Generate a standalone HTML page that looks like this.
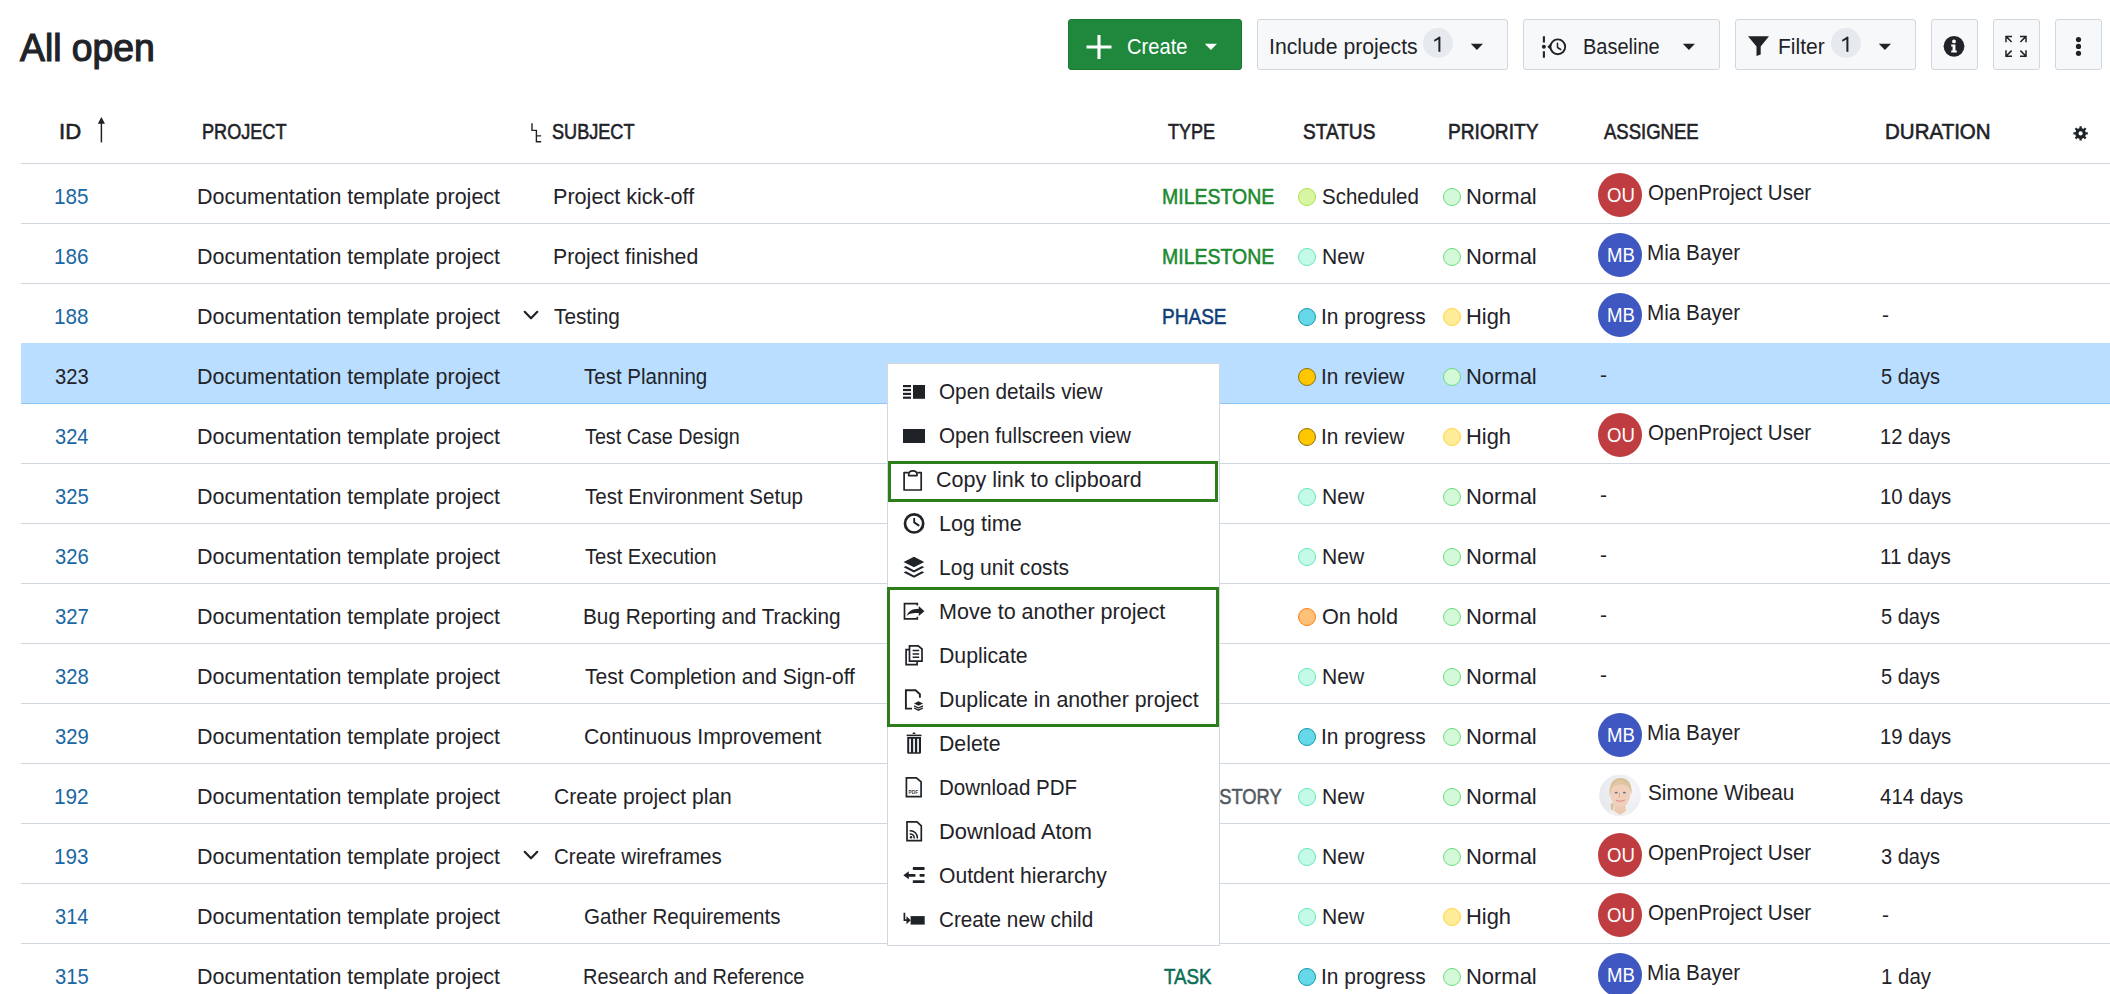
<!DOCTYPE html>
<html><head><meta charset="utf-8"><style>
html,body{margin:0;padding:0;background:#fff;width:2110px;height:994px;overflow:hidden;position:relative}
body{font-family:"Liberation Sans",sans-serif;color:#1f2328}
.t{position:absolute;white-space:nowrap}
svg{overflow:visible}
</style></head><body>
<div class="t" style="left:20.0px;top:29px;font-size:38px;line-height:38px;font-weight:400;color:#1f2328;transform:scaleX(0.9822);transform-origin:0 0;-webkit-text-stroke:1.2px #1f2328;">All open</div>
<div style="position:absolute;left:1068px;top:19px;width:174px;height:51px;box-sizing:border-box;border-radius:3px;background:#1f883d;border:1px solid #1b7a37;"></div>
<svg style="position:absolute;left:1086px;top:35px" width="26" height="25" viewBox="0 0 26 25"><path d="M13 0V24M0.5 12H25.5" stroke="#fff" stroke-width="3.1"/></svg>
<div class="t" style="left:1126.99px;top:37px;font-size:21.5px;line-height:21.5px;font-weight:400;color:#fff;transform:scaleX(0.9366);transform-origin:0 0;">Create</div>
<svg style="position:absolute;left:1204px;top:43px" width="14" height="8" viewBox="0 0 14 8"><path d="M0.8 0.8H13L6.9 7Z" fill="#fff"/></svg>
<div style="position:absolute;left:1257px;top:19px;width:251px;height:51px;box-sizing:border-box;border-radius:3px;background:#f6f8fa;border:1px solid #d0d7de;"></div>
<div class="t" style="left:1268.69px;top:37px;font-size:21.5px;line-height:21.5px;font-weight:400;color:#1f2328;transform:scaleX(0.9877);transform-origin:0 0;">Include projects</div>
<div style="position:absolute;left:1423px;top:28px;width:30px;height:30px;border-radius:15px;background:#e6eaef"></div>
<svg style="position:absolute;left:1423px;top:28px" width="30" height="30" viewBox="0 0 30 30"><path d="M16.4 8.8V23.8" stroke="#1f2328" stroke-width="2"/><path d="M16.6 8.6L11.2 11.8V13.8L16.4 11Z" fill="#1f2328"/></svg>
<svg style="position:absolute;left:1470px;top:43px" width="14" height="8" viewBox="0 0 14 8"><path d="M0.8 0.8H13L6.9 7Z" fill="#1f2328"/></svg>
<div style="position:absolute;left:1523px;top:19px;width:197px;height:51px;box-sizing:border-box;border-radius:3px;background:#f6f8fa;border:1px solid #d0d7de;"></div>
<svg style="position:absolute;left:0;top:0" width="2110" height="80" viewBox="0 0 2110 80"><path d="M1543.9 36.2V42.6M1543.9 51.2V57.7" stroke="#1f2328" stroke-width="2.1"/><circle cx="1543.9" cy="46.8" r="2" fill="#1f2328"/><path d="M1547.3 46.8L1550.8 43.6V50Z" fill="#1f2328"/><circle cx="1557.8" cy="46.8" r="7.4" fill="none" stroke="#1f2328" stroke-width="1.9"/><path d="M1557.5 43.2V47.5L1560.7 49.5" fill="none" stroke="#1f2328" stroke-width="1.5" stroke-linecap="round" stroke-linejoin="round"/></svg>
<div class="t" style="left:1582.9px;top:37px;font-size:21.5px;line-height:21.5px;font-weight:400;color:#1f2328;transform:scaleX(0.9302);transform-origin:0 0;">Baseline</div>
<svg style="position:absolute;left:1682px;top:43px" width="14" height="8" viewBox="0 0 14 8"><path d="M0.8 0.8H13L6.9 7Z" fill="#1f2328"/></svg>
<div style="position:absolute;left:1735px;top:19px;width:181px;height:51px;box-sizing:border-box;border-radius:3px;background:#f6f8fa;border:1px solid #d0d7de;"></div>
<svg style="position:absolute;left:0;top:0" width="2110" height="80" viewBox="0 0 2110 80"><path d="M1748 36.2H1769L1760.7 46.6V54.6L1756.5 56V46.6Z" fill="#1f2328"/></svg>
<div class="t" style="left:1777.82px;top:37px;font-size:21.5px;line-height:21.5px;font-weight:400;color:#1f2328;transform:scaleX(0.9784);transform-origin:0 0;">Filter</div>
<div style="position:absolute;left:1831px;top:28px;width:30px;height:30px;border-radius:15px;background:#e6eaef"></div>
<svg style="position:absolute;left:1831px;top:28px" width="30" height="30" viewBox="0 0 30 30"><path d="M16.4 8.8V23.8" stroke="#1f2328" stroke-width="2"/><path d="M16.6 8.6L11.2 11.8V13.8L16.4 11Z" fill="#1f2328"/></svg>
<svg style="position:absolute;left:1878px;top:43px" width="14" height="8" viewBox="0 0 14 8"><path d="M0.8 0.8H13L6.9 7Z" fill="#1f2328"/></svg>
<div style="position:absolute;left:1931px;top:19px;width:47px;height:51px;box-sizing:border-box;border-radius:3px;background:#f6f8fa;border:1px solid #d0d7de;"></div>
<svg style="position:absolute;left:1943px;top:35px" width="22" height="22" viewBox="0 0 22 22"><circle cx="11" cy="11.3" r="10.4" fill="#1f2328"/><circle cx="11" cy="6.4" r="1.9" fill="#fff"/><path d="M8.2 9.6H12.4V15.6H13.8V17.4H8.2V15.6H9.6V11.4H8.2Z" fill="#fff"/></svg>
<div style="position:absolute;left:1993px;top:19px;width:47px;height:51px;box-sizing:border-box;border-radius:3px;background:#f6f8fa;border:1px solid #d0d7de;"></div>
<svg style="position:absolute;left:0;top:0" width="2110" height="80" viewBox="0 0 2110 80" fill="none" stroke="#1f2328" stroke-width="1.5"><path d="M2006 42.2V36.4H2012M2006 36.4L2011.6 42"/><path d="M2026 42.2V36.4H2020M2026 36.4L2020.4 42"/><path d="M2006 50.2V56.2H2012M2006 56.2L2011.6 50.6"/><path d="M2026 50.2V56.2H2020M2026 56.2L2020.4 50.6"/></svg>
<div style="position:absolute;left:2055px;top:19px;width:47px;height:51px;box-sizing:border-box;border-radius:3px;background:#f6f8fa;border:1px solid #d0d7de;"></div>
<svg style="position:absolute;left:2074px;top:35px" width="9" height="23" viewBox="0 0 9 23" fill="#1f2328"><circle cx="4.5" cy="4.6" r="2.6"/><circle cx="4.5" cy="11.4" r="2.6"/><circle cx="4.5" cy="18.3" r="2.6"/></svg>
<div class="t" style="left:59.31px;top:122px;font-size:21.5px;line-height:21.5px;font-weight:400;color:#1f2328;transform:scaleX(1.027);transform-origin:0 0;-webkit-text-stroke:0.6px #1f2328;">ID</div>
<svg style="position:absolute;left:0;top:0" width="2110" height="200" viewBox="0 0 2110 200"><path d="M101.4 117.1L105 123.8H97.8Z" fill="#1f2328"/><path d="M101.4 123V142.4" stroke="#1f2328" stroke-width="1.5"/><path d="M532 123.2V130.4H536.4V141.7H541.2M536.4 135.9H541.2" fill="none" stroke="#1f2328" stroke-width="1.4"/></svg>
<div class="t" style="left:202.15px;top:122px;font-size:21.5px;line-height:21.5px;font-weight:400;color:#1f2328;transform:scaleX(0.8416);transform-origin:0 0;-webkit-text-stroke:0.6px #1f2328;">PROJECT</div>
<div class="t" style="left:552.19px;top:122px;font-size:21.5px;line-height:21.5px;font-weight:400;color:#1f2328;transform:scaleX(0.8422);transform-origin:0 0;-webkit-text-stroke:0.6px #1f2328;">SUBJECT</div>
<div class="t" style="left:1167.94px;top:122px;font-size:21.5px;line-height:21.5px;font-weight:400;color:#1f2328;transform:scaleX(0.839);transform-origin:0 0;-webkit-text-stroke:0.6px #1f2328;">TYPE</div>
<div class="t" style="left:1303.44px;top:122px;font-size:21.5px;line-height:21.5px;font-weight:400;color:#1f2328;transform:scaleX(0.8863);transform-origin:0 0;-webkit-text-stroke:0.6px #1f2328;">STATUS</div>
<div class="t" style="left:1447.87px;top:122px;font-size:21.5px;line-height:21.5px;font-weight:400;color:#1f2328;transform:scaleX(0.891);transform-origin:0 0;-webkit-text-stroke:0.6px #1f2328;">PRIORITY</div>
<div class="t" style="left:1604.3px;top:122px;font-size:21.5px;line-height:21.5px;font-weight:400;color:#1f2328;transform:scaleX(0.8605);transform-origin:0 0;-webkit-text-stroke:0.6px #1f2328;">ASSIGNEE</div>
<div class="t" style="left:1885.06px;top:122px;font-size:21.5px;line-height:21.5px;font-weight:400;color:#1f2328;transform:scaleX(0.9545);transform-origin:0 0;-webkit-text-stroke:0.6px #1f2328;">DURATION</div>
<svg style="position:absolute;left:0;top:0" width="2110" height="200" viewBox="0 0 2110 200"><circle cx="2080.6" cy="133.4" r="3.7" fill="none" stroke="#1f2328" stroke-width="3.2"/><path d="M2084.80 133.40L2087.80 133.40M2083.57 136.37L2085.69 138.49M2080.60 137.60L2080.60 140.60M2077.63 136.37L2075.51 138.49M2076.40 133.40L2073.40 133.40M2077.63 130.43L2075.51 128.31M2080.60 129.20L2080.60 126.20M2083.57 130.43L2085.69 128.31" stroke="#1f2328" stroke-width="2.3"/></svg>
<div style="position:absolute;left:21px;top:163px;width:2089px;height:1px;background:#d0d7de"></div>
<div style="position:absolute;left:21px;top:223px;width:2089px;height:1px;background:#d0d7de"></div>
<div class="t" style="left:53.95px;top:187px;font-size:21.5px;line-height:21.5px;font-weight:400;color:#1a67a3;transform:scaleX(0.9602);transform-origin:0 0;">185</div>
<div class="t" style="left:197.08px;top:187px;font-size:21.5px;line-height:21.5px;font-weight:400;color:#1f2328;transform:scaleX(0.9982);transform-origin:0 0;">Documentation template project</div>
<div class="t" style="left:552.87px;top:187px;font-size:21.5px;line-height:21.5px;font-weight:400;color:#1f2328;transform:scaleX(1.0044);transform-origin:0 0;">Project kick-off</div>
<div class="t" style="left:1162.32px;top:187px;font-size:21.5px;line-height:21.5px;font-weight:400;color:#1d8a30;transform:scaleX(0.9059);transform-origin:0 0;-webkit-text-stroke:0.55px #1d8a30;">MILESTONE</div>
<div style="position:absolute;left:1298px;top:188px;width:18px;height:18px;box-sizing:border-box;border-radius:50%;background:#d8f5a2;border:1px solid #a9e34b"></div>
<div class="t" style="left:1322.28px;top:187px;font-size:21.5px;line-height:21.5px;font-weight:400;color:#1f2328;transform:scaleX(0.9524);transform-origin:0 0;">Scheduled</div>
<div style="position:absolute;left:1443px;top:188px;width:18px;height:18px;box-sizing:border-box;border-radius:50%;background:#d3f9d8;border:1px solid #69db7c"></div>
<div class="t" style="left:1466.44px;top:187px;font-size:21.5px;line-height:21.5px;font-weight:400;color:#1f2328;transform:scaleX(1.021);transform-origin:0 0;">Normal</div>
<div style="position:absolute;left:1598px;top:173px;width:44px;height:44px;border-radius:50%;background:#bf3d41"></div>
<div class="t" style="left:1607px;top:185px;font-size:20px;line-height:20px;font-weight:400;color:#fff;transform:scaleX(0.93);transform-origin:0 0;">OU</div>
<div class="t" style="left:1647.88px;top:183px;font-size:21.5px;line-height:21.5px;font-weight:400;color:#1f2328;transform:scaleX(0.955);transform-origin:0 0;">OpenProject User</div>
<div style="position:absolute;left:21px;top:283px;width:2089px;height:1px;background:#d0d7de"></div>
<div class="t" style="left:53.95px;top:247px;font-size:21.5px;line-height:21.5px;font-weight:400;color:#1a67a3;transform:scaleX(0.9602);transform-origin:0 0;">186</div>
<div class="t" style="left:197.08px;top:247px;font-size:21.5px;line-height:21.5px;font-weight:400;color:#1f2328;transform:scaleX(0.9982);transform-origin:0 0;">Documentation template project</div>
<div class="t" style="left:552.9px;top:247px;font-size:21.5px;line-height:21.5px;font-weight:400;color:#1f2328;transform:scaleX(0.9879);transform-origin:0 0;">Project finished</div>
<div class="t" style="left:1162.32px;top:247px;font-size:21.5px;line-height:21.5px;font-weight:400;color:#1d8a30;transform:scaleX(0.9059);transform-origin:0 0;-webkit-text-stroke:0.55px #1d8a30;">MILESTONE</div>
<div style="position:absolute;left:1298px;top:248px;width:18px;height:18px;box-sizing:border-box;border-radius:50%;background:#c3fae8;border:1px solid #63e6be"></div>
<div class="t" style="left:1321.51px;top:247px;font-size:21.5px;line-height:21.5px;font-weight:400;color:#1f2328;transform:scaleX(0.981);transform-origin:0 0;">New</div>
<div style="position:absolute;left:1443px;top:248px;width:18px;height:18px;box-sizing:border-box;border-radius:50%;background:#d3f9d8;border:1px solid #69db7c"></div>
<div class="t" style="left:1466.44px;top:247px;font-size:21.5px;line-height:21.5px;font-weight:400;color:#1f2328;transform:scaleX(1.021);transform-origin:0 0;">Normal</div>
<div style="position:absolute;left:1598px;top:233px;width:44px;height:44px;border-radius:50%;background:#3f57c0"></div>
<div class="t" style="left:1607px;top:245px;font-size:20px;line-height:20px;font-weight:400;color:#fff;transform:scaleX(0.93);transform-origin:0 0;">MB</div>
<div class="t" style="left:1647.14px;top:243px;font-size:21.5px;line-height:21.5px;font-weight:400;color:#1f2328;transform:scaleX(0.963);transform-origin:0 0;">Mia Bayer</div>
<div style="position:absolute;left:21px;top:343px;width:2089px;height:1px;background:#d0d7de"></div>
<div class="t" style="left:53.95px;top:307px;font-size:21.5px;line-height:21.5px;font-weight:400;color:#1a67a3;transform:scaleX(0.9602);transform-origin:0 0;">188</div>
<div class="t" style="left:197.08px;top:307px;font-size:21.5px;line-height:21.5px;font-weight:400;color:#1f2328;transform:scaleX(0.9982);transform-origin:0 0;">Documentation template project</div>
<svg style="position:absolute;left:523px;top:310px" width="16" height="11" viewBox="0 0 16 11"><path d="M1.7 1.8L8 8.3L14.3 1.8" fill="none" stroke="#1f2328" stroke-width="2.2" stroke-linecap="round" stroke-linejoin="round"/></svg>
<div class="t" style="left:554.18px;top:307px;font-size:21.5px;line-height:21.5px;font-weight:400;color:#1f2328;transform:scaleX(0.9665);transform-origin:0 0;">Testing</div>
<div class="t" style="left:1162.35px;top:307px;font-size:21.5px;line-height:21.5px;font-weight:400;color:#0e3f7a;transform:scaleX(0.8854);transform-origin:0 0;-webkit-text-stroke:0.55px #0e3f7a;">PHASE</div>
<div style="position:absolute;left:1298px;top:308px;width:18px;height:18px;box-sizing:border-box;border-radius:50%;background:#66d9e8;border:1px solid #1098ad"></div>
<div class="t" style="left:1321.32px;top:307px;font-size:21.5px;line-height:21.5px;font-weight:400;color:#1f2328;transform:scaleX(0.9741);transform-origin:0 0;">In progress</div>
<div style="position:absolute;left:1443px;top:308px;width:18px;height:18px;box-sizing:border-box;border-radius:50%;background:#ffec99;border:1px solid #ffd43b"></div>
<div class="t" style="left:1466.45px;top:307px;font-size:21.5px;line-height:21.5px;font-weight:400;color:#1f2328;transform:scaleX(1.0179);transform-origin:0 0;">High</div>
<div style="position:absolute;left:1598px;top:293px;width:44px;height:44px;border-radius:50%;background:#3f57c0"></div>
<div class="t" style="left:1607px;top:305px;font-size:20px;line-height:20px;font-weight:400;color:#fff;transform:scaleX(0.93);transform-origin:0 0;">MB</div>
<div class="t" style="left:1647.14px;top:303px;font-size:21.5px;line-height:21.5px;font-weight:400;color:#1f2328;transform:scaleX(0.963);transform-origin:0 0;">Mia Bayer</div>
<div class="t" style="left:1882px;top:304px;font-size:21px;line-height:21px;font-weight:400;color:#1f2328;">-</div>
<div style="position:absolute;left:21px;top:343px;width:2089px;height:60px;background:#b9deff"></div>
<div style="position:absolute;left:21px;top:403px;width:2089px;height:1px;background:#8ec5f7"></div>
<div class="t" style="left:54.69px;top:367px;font-size:21.5px;line-height:21.5px;font-weight:400;color:#1f2328;transform:scaleX(0.939);transform-origin:0 0;">323</div>
<div class="t" style="left:197.08px;top:367px;font-size:21.5px;line-height:21.5px;font-weight:400;color:#1f2328;transform:scaleX(0.9982);transform-origin:0 0;">Documentation template project</div>
<div class="t" style="left:584.09px;top:367px;font-size:21.5px;line-height:21.5px;font-weight:400;color:#1f2328;transform:scaleX(0.9546);transform-origin:0 0;">Test Planning</div>
<div style="position:absolute;left:1298px;top:368px;width:18px;height:18px;box-sizing:border-box;border-radius:50%;background:#ffc700;border:1px solid #8f7100"></div>
<div class="t" style="left:1321.33px;top:367px;font-size:21.5px;line-height:21.5px;font-weight:400;color:#1f2328;transform:scaleX(0.9682);transform-origin:0 0;">In review</div>
<div style="position:absolute;left:1443px;top:368px;width:18px;height:18px;box-sizing:border-box;border-radius:50%;background:#d3f9d8;border:1px solid #69db7c"></div>
<div class="t" style="left:1466.44px;top:367px;font-size:21.5px;line-height:21.5px;font-weight:400;color:#1f2328;transform:scaleX(1.021);transform-origin:0 0;">Normal</div>
<div class="t" style="left:1600px;top:364px;font-size:21px;line-height:21px;font-weight:400;color:#1f2328;">-</div>
<div class="t" style="left:1880.7px;top:367px;font-size:21.5px;line-height:21.5px;font-weight:400;color:#1f2328;transform:scaleX(0.9319);transform-origin:0 0;">5 days</div>
<div style="position:absolute;left:21px;top:463px;width:2089px;height:1px;background:#d0d7de"></div>
<div class="t" style="left:54.7px;top:427px;font-size:21.5px;line-height:21.5px;font-weight:400;color:#1a67a3;transform:scaleX(0.9331);transform-origin:0 0;">324</div>
<div class="t" style="left:197.08px;top:427px;font-size:21.5px;line-height:21.5px;font-weight:400;color:#1f2328;transform:scaleX(0.9982);transform-origin:0 0;">Documentation template project</div>
<div class="t" style="left:584.7px;top:427px;font-size:21.5px;line-height:21.5px;font-weight:400;color:#1f2328;transform:scaleX(0.9188);transform-origin:0 0;">Test Case Design</div>
<div style="position:absolute;left:1298px;top:428px;width:18px;height:18px;box-sizing:border-box;border-radius:50%;background:#ffc700;border:1px solid #8f7100"></div>
<div class="t" style="left:1321.33px;top:427px;font-size:21.5px;line-height:21.5px;font-weight:400;color:#1f2328;transform:scaleX(0.9682);transform-origin:0 0;">In review</div>
<div style="position:absolute;left:1443px;top:428px;width:18px;height:18px;box-sizing:border-box;border-radius:50%;background:#ffec99;border:1px solid #ffd43b"></div>
<div class="t" style="left:1466.45px;top:427px;font-size:21.5px;line-height:21.5px;font-weight:400;color:#1f2328;transform:scaleX(1.0179);transform-origin:0 0;">High</div>
<div style="position:absolute;left:1598px;top:413px;width:44px;height:44px;border-radius:50%;background:#bf3d41"></div>
<div class="t" style="left:1607px;top:425px;font-size:20px;line-height:20px;font-weight:400;color:#fff;transform:scaleX(0.93);transform-origin:0 0;">OU</div>
<div class="t" style="left:1647.88px;top:423px;font-size:21.5px;line-height:21.5px;font-weight:400;color:#1f2328;transform:scaleX(0.955);transform-origin:0 0;">OpenProject User</div>
<div class="t" style="left:1879.99px;top:427px;font-size:21.5px;line-height:21.5px;font-weight:400;color:#1f2328;transform:scaleX(0.9357);transform-origin:0 0;">12 days</div>
<div style="position:absolute;left:21px;top:523px;width:2089px;height:1px;background:#d0d7de"></div>
<div class="t" style="left:54.69px;top:487px;font-size:21.5px;line-height:21.5px;font-weight:400;color:#1a67a3;transform:scaleX(0.939);transform-origin:0 0;">325</div>
<div class="t" style="left:197.08px;top:487px;font-size:21.5px;line-height:21.5px;font-weight:400;color:#1f2328;transform:scaleX(0.9982);transform-origin:0 0;">Documentation template project</div>
<div class="t" style="left:584.69px;top:487px;font-size:21.5px;line-height:21.5px;font-weight:400;color:#1f2328;transform:scaleX(0.9549);transform-origin:0 0;">Test Environment Setup</div>
<div style="position:absolute;left:1298px;top:488px;width:18px;height:18px;box-sizing:border-box;border-radius:50%;background:#c3fae8;border:1px solid #63e6be"></div>
<div class="t" style="left:1321.51px;top:487px;font-size:21.5px;line-height:21.5px;font-weight:400;color:#1f2328;transform:scaleX(0.981);transform-origin:0 0;">New</div>
<div style="position:absolute;left:1443px;top:488px;width:18px;height:18px;box-sizing:border-box;border-radius:50%;background:#d3f9d8;border:1px solid #69db7c"></div>
<div class="t" style="left:1466.44px;top:487px;font-size:21.5px;line-height:21.5px;font-weight:400;color:#1f2328;transform:scaleX(1.021);transform-origin:0 0;">Normal</div>
<div class="t" style="left:1600px;top:484px;font-size:21px;line-height:21px;font-weight:400;color:#1f2328;">-</div>
<div class="t" style="left:1880.07px;top:487px;font-size:21.5px;line-height:21.5px;font-weight:400;color:#1f2328;transform:scaleX(0.9467);transform-origin:0 0;">10 days</div>
<div style="position:absolute;left:21px;top:583px;width:2089px;height:1px;background:#d0d7de"></div>
<div class="t" style="left:54.69px;top:547px;font-size:21.5px;line-height:21.5px;font-weight:400;color:#1a67a3;transform:scaleX(0.939);transform-origin:0 0;">326</div>
<div class="t" style="left:197.08px;top:547px;font-size:21.5px;line-height:21.5px;font-weight:400;color:#1f2328;transform:scaleX(0.9982);transform-origin:0 0;">Documentation template project</div>
<div class="t" style="left:584.7px;top:547px;font-size:21.5px;line-height:21.5px;font-weight:400;color:#1f2328;transform:scaleX(0.9411);transform-origin:0 0;">Test Execution</div>
<div style="position:absolute;left:1298px;top:548px;width:18px;height:18px;box-sizing:border-box;border-radius:50%;background:#c3fae8;border:1px solid #63e6be"></div>
<div class="t" style="left:1321.51px;top:547px;font-size:21.5px;line-height:21.5px;font-weight:400;color:#1f2328;transform:scaleX(0.981);transform-origin:0 0;">New</div>
<div style="position:absolute;left:1443px;top:548px;width:18px;height:18px;box-sizing:border-box;border-radius:50%;background:#d3f9d8;border:1px solid #69db7c"></div>
<div class="t" style="left:1466.44px;top:547px;font-size:21.5px;line-height:21.5px;font-weight:400;color:#1f2328;transform:scaleX(1.021);transform-origin:0 0;">Normal</div>
<div class="t" style="left:1600px;top:544px;font-size:21px;line-height:21px;font-weight:400;color:#1f2328;">-</div>
<div class="t" style="left:1880.05px;top:547px;font-size:21.5px;line-height:21.5px;font-weight:400;color:#1f2328;transform:scaleX(0.9611);transform-origin:0 0;">11 days</div>
<div style="position:absolute;left:21px;top:643px;width:2089px;height:1px;background:#d0d7de"></div>
<div class="t" style="left:54.69px;top:607px;font-size:21.5px;line-height:21.5px;font-weight:400;color:#1a67a3;transform:scaleX(0.945);transform-origin:0 0;">327</div>
<div class="t" style="left:197.08px;top:607px;font-size:21.5px;line-height:21.5px;font-weight:400;color:#1f2328;transform:scaleX(0.9982);transform-origin:0 0;">Documentation template project</div>
<div class="t" style="left:583.44px;top:607px;font-size:21.5px;line-height:21.5px;font-weight:400;color:#1f2328;transform:scaleX(0.9663);transform-origin:0 0;">Bug Reporting and Tracking</div>
<div style="position:absolute;left:1298px;top:608px;width:18px;height:18px;box-sizing:border-box;border-radius:50%;background:#ffc078;border:1px solid #fd7e14"></div>
<div class="t" style="left:1322.22px;top:607px;font-size:21.5px;line-height:21.5px;font-weight:400;color:#1f2328;transform:scaleX(1.0084);transform-origin:0 0;">On hold</div>
<div style="position:absolute;left:1443px;top:608px;width:18px;height:18px;box-sizing:border-box;border-radius:50%;background:#d3f9d8;border:1px solid #69db7c"></div>
<div class="t" style="left:1466.44px;top:607px;font-size:21.5px;line-height:21.5px;font-weight:400;color:#1f2328;transform:scaleX(1.021);transform-origin:0 0;">Normal</div>
<div class="t" style="left:1600px;top:604px;font-size:21px;line-height:21px;font-weight:400;color:#1f2328;">-</div>
<div class="t" style="left:1880.7px;top:607px;font-size:21.5px;line-height:21.5px;font-weight:400;color:#1f2328;transform:scaleX(0.9319);transform-origin:0 0;">5 days</div>
<div style="position:absolute;left:21px;top:703px;width:2089px;height:1px;background:#d0d7de"></div>
<div class="t" style="left:54.69px;top:667px;font-size:21.5px;line-height:21.5px;font-weight:400;color:#1a67a3;transform:scaleX(0.939);transform-origin:0 0;">328</div>
<div class="t" style="left:197.08px;top:667px;font-size:21.5px;line-height:21.5px;font-weight:400;color:#1f2328;transform:scaleX(0.9982);transform-origin:0 0;">Documentation template project</div>
<div class="t" style="left:584.68px;top:667px;font-size:21.5px;line-height:21.5px;font-weight:400;color:#1f2328;transform:scaleX(0.9793);transform-origin:0 0;">Test Completion and Sign-off</div>
<div style="position:absolute;left:1298px;top:668px;width:18px;height:18px;box-sizing:border-box;border-radius:50%;background:#c3fae8;border:1px solid #63e6be"></div>
<div class="t" style="left:1321.51px;top:667px;font-size:21.5px;line-height:21.5px;font-weight:400;color:#1f2328;transform:scaleX(0.981);transform-origin:0 0;">New</div>
<div style="position:absolute;left:1443px;top:668px;width:18px;height:18px;box-sizing:border-box;border-radius:50%;background:#d3f9d8;border:1px solid #69db7c"></div>
<div class="t" style="left:1466.44px;top:667px;font-size:21.5px;line-height:21.5px;font-weight:400;color:#1f2328;transform:scaleX(1.021);transform-origin:0 0;">Normal</div>
<div class="t" style="left:1600px;top:664px;font-size:21px;line-height:21px;font-weight:400;color:#1f2328;">-</div>
<div class="t" style="left:1880.7px;top:667px;font-size:21.5px;line-height:21.5px;font-weight:400;color:#1f2328;transform:scaleX(0.9319);transform-origin:0 0;">5 days</div>
<div style="position:absolute;left:21px;top:763px;width:2089px;height:1px;background:#d0d7de"></div>
<div class="t" style="left:54.69px;top:727px;font-size:21.5px;line-height:21.5px;font-weight:400;color:#1a67a3;transform:scaleX(0.942);transform-origin:0 0;">329</div>
<div class="t" style="left:197.08px;top:727px;font-size:21.5px;line-height:21.5px;font-weight:400;color:#1f2328;transform:scaleX(0.9982);transform-origin:0 0;">Documentation template project</div>
<div class="t" style="left:583.84px;top:727px;font-size:21.5px;line-height:21.5px;font-weight:400;color:#1f2328;transform:scaleX(0.988);transform-origin:0 0;">Continuous Improvement</div>
<div style="position:absolute;left:1298px;top:728px;width:18px;height:18px;box-sizing:border-box;border-radius:50%;background:#66d9e8;border:1px solid #1098ad"></div>
<div class="t" style="left:1321.32px;top:727px;font-size:21.5px;line-height:21.5px;font-weight:400;color:#1f2328;transform:scaleX(0.9741);transform-origin:0 0;">In progress</div>
<div style="position:absolute;left:1443px;top:728px;width:18px;height:18px;box-sizing:border-box;border-radius:50%;background:#d3f9d8;border:1px solid #69db7c"></div>
<div class="t" style="left:1466.44px;top:727px;font-size:21.5px;line-height:21.5px;font-weight:400;color:#1f2328;transform:scaleX(1.021);transform-origin:0 0;">Normal</div>
<div style="position:absolute;left:1598px;top:713px;width:44px;height:44px;border-radius:50%;background:#3f57c0"></div>
<div class="t" style="left:1607px;top:725px;font-size:20px;line-height:20px;font-weight:400;color:#fff;transform:scaleX(0.93);transform-origin:0 0;">MB</div>
<div class="t" style="left:1647.14px;top:723px;font-size:21.5px;line-height:21.5px;font-weight:400;color:#1f2328;transform:scaleX(0.963);transform-origin:0 0;">Mia Bayer</div>
<div class="t" style="left:1880.07px;top:727px;font-size:21.5px;line-height:21.5px;font-weight:400;color:#1f2328;transform:scaleX(0.9467);transform-origin:0 0;">19 days</div>
<div style="position:absolute;left:21px;top:823px;width:2089px;height:1px;background:#d0d7de"></div>
<div class="t" style="left:53.94px;top:787px;font-size:21.5px;line-height:21.5px;font-weight:400;color:#1a67a3;transform:scaleX(0.9665);transform-origin:0 0;">192</div>
<div class="t" style="left:197.08px;top:787px;font-size:21.5px;line-height:21.5px;font-weight:400;color:#1f2328;transform:scaleX(0.9982);transform-origin:0 0;">Documentation template project</div>
<div class="t" style="left:553.55px;top:787px;font-size:21.5px;line-height:21.5px;font-weight:400;color:#1f2328;transform:scaleX(0.9788);transform-origin:0 0;">Create project plan</div>
<div class="t" style="left:1162.5px;top:787px;font-size:21.5px;line-height:21.5px;font-weight:400;color:#555a60;transform:scaleX(0.8547);transform-origin:0 0;-webkit-text-stroke:0.55px #555a60;">USER STORY</div>
<div style="position:absolute;left:1298px;top:788px;width:18px;height:18px;box-sizing:border-box;border-radius:50%;background:#c3fae8;border:1px solid #63e6be"></div>
<div class="t" style="left:1321.51px;top:787px;font-size:21.5px;line-height:21.5px;font-weight:400;color:#1f2328;transform:scaleX(0.981);transform-origin:0 0;">New</div>
<div style="position:absolute;left:1443px;top:788px;width:18px;height:18px;box-sizing:border-box;border-radius:50%;background:#d3f9d8;border:1px solid #69db7c"></div>
<div class="t" style="left:1466.44px;top:787px;font-size:21.5px;line-height:21.5px;font-weight:400;color:#1f2328;transform:scaleX(1.021);transform-origin:0 0;">Normal</div>
<svg style="position:absolute;left:1598px;top:773px" width="44" height="44" viewBox="0 0 44 44"><defs><clipPath id="c"><circle cx="22" cy="22.2" r="20.8"/></clipPath><radialGradient id="bg" cx="0.7" cy="0.4" r="0.8"><stop offset="0" stop-color="#f6f7fa"/><stop offset="1" stop-color="#e4e6eb"/></radialGradient></defs><g clip-path="url(#c)"><rect width="44" height="44" fill="url(#bg)"/><path d="M9 44C11 37 16 35 22 35C29 35 34 37 36 44Z" fill="#f3f1f0"/><path d="M17 30L27 30L28 38L22 42L16 38Z" fill="#ecc9b3"/><path d="M12 24C10 13 14 5 22.5 5C31 5 34.5 12 33.5 22C32 17 31 12 22.5 11C16 12 13.5 17 12 24Z" fill="#d9c19a"/><path d="M13 30C12 34 13 37 15 38L16 31Z" fill="#d9c19a"/><ellipse cx="22.3" cy="21" rx="10" ry="13" fill="#f0cfbb"/><path d="M13 16C15 10 19 8.5 23 8.5C28 8.5 31 11 32.3 16C29 12 26 11.5 22 11.5C18 11.5 15 13 13 16Z" fill="#dcc6a2"/><ellipse cx="18.2" cy="19.6" rx="1.5" ry="0.9" fill="#5a6f93"/><ellipse cx="26.4" cy="19.6" rx="1.5" ry="0.9" fill="#5a6f93"/><path d="M21.5 20V24.5" stroke="#d9a88e" stroke-width="1"/><path d="M18 27.2Q22.3 30.5 26.6 27.2Q22.3 29 18 27.2Z" fill="#fff" stroke="#d98f8a" stroke-width="0.8"/></g></svg>
<div class="t" style="left:1648.07px;top:783px;font-size:21.5px;line-height:21.5px;font-weight:400;color:#1f2328;transform:scaleX(0.9644);transform-origin:0 0;">Simone Wibeau</div>
<div class="t" style="left:1879.59px;top:787px;font-size:21.5px;line-height:21.5px;font-weight:400;color:#1f2328;transform:scaleX(0.9535);transform-origin:0 0;">414 days</div>
<div style="position:absolute;left:21px;top:883px;width:2089px;height:1px;background:#d0d7de"></div>
<div class="t" style="left:53.95px;top:847px;font-size:21.5px;line-height:21.5px;font-weight:400;color:#1a67a3;transform:scaleX(0.9602);transform-origin:0 0;">193</div>
<div class="t" style="left:197.08px;top:847px;font-size:21.5px;line-height:21.5px;font-weight:400;color:#1f2328;transform:scaleX(0.9982);transform-origin:0 0;">Documentation template project</div>
<svg style="position:absolute;left:523px;top:850px" width="16" height="11" viewBox="0 0 16 11"><path d="M1.7 1.8L8 8.3L14.3 1.8" fill="none" stroke="#1f2328" stroke-width="2.2" stroke-linecap="round" stroke-linejoin="round"/></svg>
<div class="t" style="left:553.57px;top:847px;font-size:21.5px;line-height:21.5px;font-weight:400;color:#1f2328;transform:scaleX(0.955);transform-origin:0 0;">Create wireframes</div>
<div style="position:absolute;left:1298px;top:848px;width:18px;height:18px;box-sizing:border-box;border-radius:50%;background:#c3fae8;border:1px solid #63e6be"></div>
<div class="t" style="left:1321.51px;top:847px;font-size:21.5px;line-height:21.5px;font-weight:400;color:#1f2328;transform:scaleX(0.981);transform-origin:0 0;">New</div>
<div style="position:absolute;left:1443px;top:848px;width:18px;height:18px;box-sizing:border-box;border-radius:50%;background:#d3f9d8;border:1px solid #69db7c"></div>
<div class="t" style="left:1466.44px;top:847px;font-size:21.5px;line-height:21.5px;font-weight:400;color:#1f2328;transform:scaleX(1.021);transform-origin:0 0;">Normal</div>
<div style="position:absolute;left:1598px;top:833px;width:44px;height:44px;border-radius:50%;background:#bf3d41"></div>
<div class="t" style="left:1607px;top:845px;font-size:20px;line-height:20px;font-weight:400;color:#fff;transform:scaleX(0.93);transform-origin:0 0;">OU</div>
<div class="t" style="left:1647.88px;top:843px;font-size:21.5px;line-height:21.5px;font-weight:400;color:#1f2328;transform:scaleX(0.955);transform-origin:0 0;">OpenProject User</div>
<div class="t" style="left:1880.7px;top:847px;font-size:21.5px;line-height:21.5px;font-weight:400;color:#1f2328;transform:scaleX(0.9319);transform-origin:0 0;">3 days</div>
<div style="position:absolute;left:21px;top:943px;width:2089px;height:1px;background:#d0d7de"></div>
<div class="t" style="left:54.7px;top:907px;font-size:21.5px;line-height:21.5px;font-weight:400;color:#1a67a3;transform:scaleX(0.9331);transform-origin:0 0;">314</div>
<div class="t" style="left:197.08px;top:907px;font-size:21.5px;line-height:21.5px;font-weight:400;color:#1f2328;transform:scaleX(0.9982);transform-origin:0 0;">Documentation template project</div>
<div class="t" style="left:583.77px;top:907px;font-size:21.5px;line-height:21.5px;font-weight:400;color:#1f2328;transform:scaleX(0.9558);transform-origin:0 0;">Gather Requirements</div>
<div style="position:absolute;left:1298px;top:908px;width:18px;height:18px;box-sizing:border-box;border-radius:50%;background:#c3fae8;border:1px solid #63e6be"></div>
<div class="t" style="left:1321.51px;top:907px;font-size:21.5px;line-height:21.5px;font-weight:400;color:#1f2328;transform:scaleX(0.981);transform-origin:0 0;">New</div>
<div style="position:absolute;left:1443px;top:908px;width:18px;height:18px;box-sizing:border-box;border-radius:50%;background:#ffec99;border:1px solid #ffd43b"></div>
<div class="t" style="left:1466.45px;top:907px;font-size:21.5px;line-height:21.5px;font-weight:400;color:#1f2328;transform:scaleX(1.0179);transform-origin:0 0;">High</div>
<div style="position:absolute;left:1598px;top:893px;width:44px;height:44px;border-radius:50%;background:#bf3d41"></div>
<div class="t" style="left:1607px;top:905px;font-size:20px;line-height:20px;font-weight:400;color:#fff;transform:scaleX(0.93);transform-origin:0 0;">OU</div>
<div class="t" style="left:1647.88px;top:903px;font-size:21.5px;line-height:21.5px;font-weight:400;color:#1f2328;transform:scaleX(0.955);transform-origin:0 0;">OpenProject User</div>
<div class="t" style="left:1882px;top:904px;font-size:21px;line-height:21px;font-weight:400;color:#1f2328;">-</div>
<div style="position:absolute;left:21px;top:1003px;width:2089px;height:1px;background:#d0d7de"></div>
<div class="t" style="left:54.69px;top:967px;font-size:21.5px;line-height:21.5px;font-weight:400;color:#1a67a3;transform:scaleX(0.939);transform-origin:0 0;">315</div>
<div class="t" style="left:197.08px;top:967px;font-size:21.5px;line-height:21.5px;font-weight:400;color:#1f2328;transform:scaleX(0.9982);transform-origin:0 0;">Documentation template project</div>
<div class="t" style="left:583.21px;top:967px;font-size:21.5px;line-height:21.5px;font-weight:400;color:#1f2328;transform:scaleX(0.9264);transform-origin:0 0;">Research and Reference</div>
<div class="t" style="left:1163.5px;top:967px;font-size:21.5px;line-height:21.5px;font-weight:400;color:#0b6e55;transform:scaleX(0.8717);transform-origin:0 0;-webkit-text-stroke:0.55px #0b6e55;">TASK</div>
<div style="position:absolute;left:1298px;top:968px;width:18px;height:18px;box-sizing:border-box;border-radius:50%;background:#66d9e8;border:1px solid #1098ad"></div>
<div class="t" style="left:1321.32px;top:967px;font-size:21.5px;line-height:21.5px;font-weight:400;color:#1f2328;transform:scaleX(0.9741);transform-origin:0 0;">In progress</div>
<div style="position:absolute;left:1443px;top:968px;width:18px;height:18px;box-sizing:border-box;border-radius:50%;background:#d3f9d8;border:1px solid #69db7c"></div>
<div class="t" style="left:1466.44px;top:967px;font-size:21.5px;line-height:21.5px;font-weight:400;color:#1f2328;transform:scaleX(1.021);transform-origin:0 0;">Normal</div>
<div style="position:absolute;left:1598px;top:953px;width:44px;height:44px;border-radius:50%;background:#3f57c0"></div>
<div class="t" style="left:1607px;top:965px;font-size:20px;line-height:20px;font-weight:400;color:#fff;transform:scaleX(0.93);transform-origin:0 0;">MB</div>
<div class="t" style="left:1647.14px;top:963px;font-size:21.5px;line-height:21.5px;font-weight:400;color:#1f2328;transform:scaleX(0.963);transform-origin:0 0;">Mia Bayer</div>
<div class="t" style="left:1880.77px;top:967px;font-size:21.5px;line-height:21.5px;font-weight:400;color:#1f2328;transform:scaleX(0.9499);transform-origin:0 0;">1 day</div>
<div style="position:absolute;left:887px;top:363px;width:333px;height:583px;box-sizing:border-box;background:#fff;border:1px solid #d0d7de"></div>
<div class="t" style="left:939.47px;top:382px;font-size:21.5px;line-height:21.5px;font-weight:400;color:#1f2328;transform:scaleX(0.964);transform-origin:0 0;">Open details view</div>
<div class="t" style="left:939.47px;top:426px;font-size:21.5px;line-height:21.5px;font-weight:400;color:#1f2328;transform:scaleX(0.9614);transform-origin:0 0;">Open fullscreen view</div>
<div class="t" style="left:936.12px;top:470px;font-size:21.5px;line-height:21.5px;font-weight:400;color:#1f2328;transform:scaleX(1.0011);transform-origin:0 0;">Copy link to clipboard</div>
<div class="t" style="left:938.67px;top:514px;font-size:21.5px;line-height:21.5px;font-weight:400;color:#1f2328;transform:scaleX(1.0042);transform-origin:0 0;">Log time</div>
<div class="t" style="left:938.71px;top:558px;font-size:21.5px;line-height:21.5px;font-weight:400;color:#1f2328;transform:scaleX(0.9802);transform-origin:0 0;">Log unit costs</div>
<div class="t" style="left:938.68px;top:602px;font-size:21.5px;line-height:21.5px;font-weight:400;color:#1f2328;transform:scaleX(1.0017);transform-origin:0 0;">Move to another project</div>
<div class="t" style="left:938.7px;top:646px;font-size:21.5px;line-height:21.5px;font-weight:400;color:#1f2328;transform:scaleX(0.9889);transform-origin:0 0;">Duplicate</div>
<div class="t" style="left:938.69px;top:690px;font-size:21.5px;line-height:21.5px;font-weight:400;color:#1f2328;transform:scaleX(0.9922);transform-origin:0 0;">Duplicate in another project</div>
<div class="t" style="left:938.7px;top:734px;font-size:21.5px;line-height:21.5px;font-weight:400;color:#1f2328;transform:scaleX(0.9891);transform-origin:0 0;">Delete</div>
<div class="t" style="left:938.76px;top:778px;font-size:21.5px;line-height:21.5px;font-weight:400;color:#1f2328;transform:scaleX(0.9549);transform-origin:0 0;">Download PDF</div>
<div class="t" style="left:938.65px;top:822px;font-size:21.5px;line-height:21.5px;font-weight:400;color:#1f2328;transform:scaleX(1.0157);transform-origin:0 0;">Download Atom</div>
<div class="t" style="left:939.45px;top:866px;font-size:21.5px;line-height:21.5px;font-weight:400;color:#1f2328;transform:scaleX(0.982);transform-origin:0 0;">Outdent hierarchy</div>
<div class="t" style="left:939.37px;top:910px;font-size:21.5px;line-height:21.5px;font-weight:400;color:#1f2328;transform:scaleX(0.9626);transform-origin:0 0;">Create new child</div>
<div style="position:absolute;left:888px;top:461px;width:330px;height:41px;box-sizing:border-box;border:3px solid #2e7d1c"></div>
<div style="position:absolute;left:887px;top:587px;width:332px;height:140px;box-sizing:border-box;border:3px solid #2e7d1c"></div>
<svg style="position:absolute;left:0;top:0" width="2110" height="994" viewBox="0 0 2110 994"><rect x="903" y="385" width="8" height="2.2" fill="#1f2328"/><rect x="903" y="388.9" width="8" height="2.2" fill="#1f2328"/><rect x="903" y="392.8" width="8" height="2.2" fill="#1f2328"/><rect x="903" y="396.6" width="8" height="2.2" fill="#1f2328"/><rect x="913" y="385" width="12" height="13.8" fill="#1f2328"/><rect x="903" y="429" width="22" height="14" fill="#1f2328"/><path d="M908.3 472.6H904.1V490H921.2V472.6H917.2" fill="none" stroke="#1f2328" stroke-width="1.7" stroke-linejoin="round"/><path d="M908.7 475.6H917V474.6C917 472.3 915.1 470.9 912.85 470.9C910.6 470.9 908.7 472.3 908.7 474.6Z" fill="none" stroke="#1f2328" stroke-width="1.7" stroke-linejoin="round"/><circle cx="914.1" cy="523.4" r="9.1" fill="none" stroke="#1f2328" stroke-width="2.7"/><path d="M914.2 518.6V522.4L918.6 525.4" fill="none" stroke="#1f2328" stroke-width="1.9" stroke-linecap="round" stroke-linejoin="round"/><path d="M914 556.8L924.2 562L914 567.2L903.6 562Z" fill="#1f2328"/><path d="M903.6 567.3L905.9 566.1L914 570.2L922 566.1L924.2 567.3L914 572.6Z" fill="#1f2328"/><path d="M903.6 572.4L905.9 571.2L914 575.4L922 571.2L924.2 572.4L914 577.8Z" fill="#1f2328"/><path d="M917.3 605.5V603.6H904.5V618.8H917.3V616.8" fill="none" stroke="#1f2328" stroke-width="1.7"/><path d="M918.8 606L924.4 611.2L918.8 616V613.1C913.5 613.1 909.5 613.3 906.6 616C908 611.5 912 608.7 918.8 608.7Z" fill="#1f2328"/><path d="M909.5 645.8H918.2L922 649V661.2H909.5Z" fill="none" stroke="#1f2328" stroke-width="1.7" stroke-linejoin="miter"/><path d="M909.3 649.6H906.1V664.7H917.1V662" fill="none" stroke="#1f2328" stroke-width="1.7"/><path d="M912.6 650.6H919.2M912.6 654H919.2M912.6 657.3H919.2" stroke="#1f2328" stroke-width="1.5"/><path d="M912 708.6H905.9V690.2H915.6L919.9 694.2V697.8" fill="none" stroke="#1f2328" stroke-width="1.9"/><path d="M918.5 701.2L923 703.5L918.5 705.8L914 703.5Z" fill="#1f2328"/><path d="M914.1 705.8L918.5 708L923 705.8" fill="none" stroke="#1f2328" stroke-width="1.3"/><path d="M914.1 708L918.5 710.2L923 708" fill="none" stroke="#1f2328" stroke-width="1.3"/><rect x="906.7" y="734.6" width="14.8" height="1.6" fill="#1f2328"/><rect x="912.6" y="732.6" width="2.8" height="1.5" rx="0.7" fill="#1f2328"/><path d="M907.2 737H921V752.6Q921 753.8 919.8 753.8H908.4Q907.2 753.8 907.2 752.6ZM909.2 738.8V752.2H910.9V738.8ZM913.2 738.8V752.2H914.9V738.8ZM917.2 738.8V752.2H918.9V738.8Z" fill="#1f2328" fill-rule="evenodd"/><path d="M906.4 777.9H916.4L921.1 781.9V796.7H906.4Z" fill="none" stroke="#1f2328" stroke-width="1.7"/><text x="908.6" y="794.4" font-size="5" font-family="Liberation Sans" font-weight="700" fill="#3a3e45" textLength="9.6" lengthAdjust="spacingAndGlyphs">PDF</text><path d="M907 821.9H917L921.3 825.9V840.7H907Z" fill="none" stroke="#1f2328" stroke-width="1.7"/><path d="M910.2 830.7A7 7 0 0 1 917.4 837.9M910.2 833.9A3.9 3.9 0 0 1 914.2 837.9" fill="none" stroke="#1f2328" stroke-width="1.5" stroke-linecap="round"/><circle cx="911" cy="837.3" r="1.2" fill="#1f2328"/><rect x="912.8" y="867.1" width="11.8" height="2.8" rx="0.6" fill="#1f2328"/><path d="M903.3 875.3L908.8 871.3V874H915.4V876.7H908.8V879.3Z" fill="#1f2328"/><rect x="919.6" y="873.9" width="5" height="2.8" rx="0.6" fill="#1f2328"/><rect x="912.8" y="880.2" width="11.8" height="2.8" rx="0.6" fill="#1f2328"/><path d="M904.4 912.8V920.2H907" fill="none" stroke="#1f2328" stroke-width="1.7"/><path d="M906.5 916.2L910.7 920.2L906.5 924.3Z" fill="#1f2328"/><rect x="910.6" y="916.1" width="14.1" height="8.5" fill="#1f2328"/></svg>
</body></html>
